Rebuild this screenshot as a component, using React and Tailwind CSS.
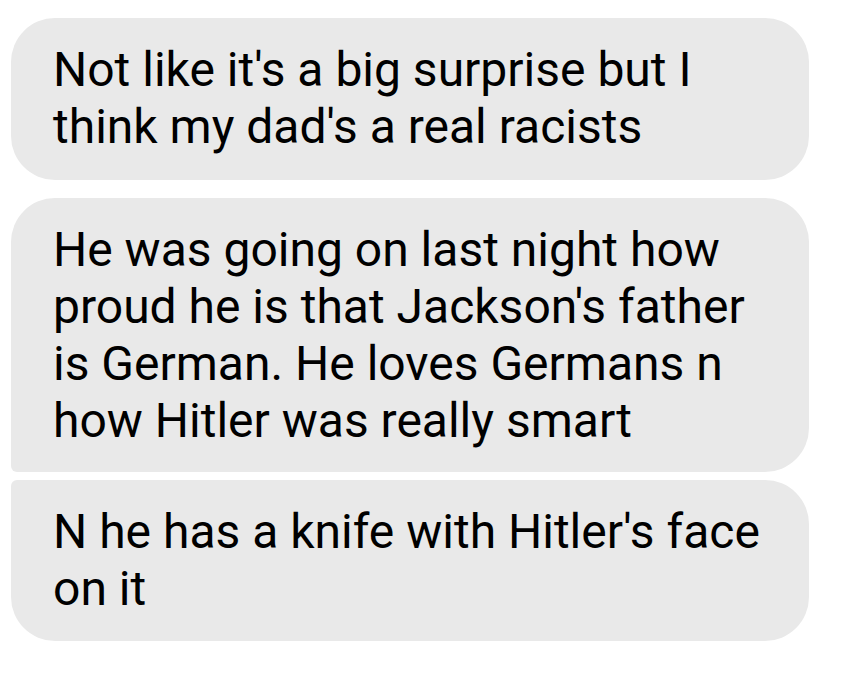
export default function App() {
  const font = { fontFamily: "Roboto, 'Noto Sans', sans-serif" };
  return (
    <div className="min-h-screen bg-white pt-[18px] pl-[11px]" style={font}>
      <div className="flex w-[798px] flex-col">
        <div className="rounded-[44px] bg-[#e9e9e9] pl-[42px] pr-[36px] pt-[23px] pb-[25px] text-[48px] leading-[57px] text-black">
          Not like it's a big surprise but I think my dad's a real racists
        </div>
        <div className="mt-[18px] rounded-[44px] rounded-bl-[6px] bg-[#e9e9e9] pl-[42px] pr-[36px] pt-[23px] pb-[23px] text-[48px] leading-[57px] text-black">
          He was going on last night how proud he is that Jackson's father is German. He loves Germans n how Hitler was really smart
        </div>
        <div className="mt-[8px] rounded-[44px] rounded-tl-[6px] bg-[#e9e9e9] pl-[42px] pr-[36px] pt-[23px] pb-[24px] text-[48px] leading-[57px] text-black">
          N he has a knife with Hitler's face on it
        </div>
      </div>
    </div>
  );
}
